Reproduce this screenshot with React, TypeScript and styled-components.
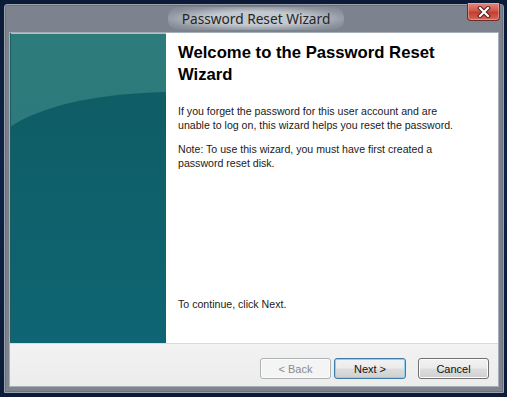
import styled, { createGlobalStyle } from 'styled-components';

const GlobalStyle = createGlobalStyle`
  html, body {
    margin: 0;
    padding: 0;
    width: 507px;
    height: 397px;
    overflow: hidden;
  }
  body {
    font-family: "Liberation Sans", Arial, sans-serif;
  }
`;

const Desktop = styled.div`
  width: 507px;
  height: 397px;
  box-sizing: border-box;
  padding: 4px 3px 4px 4px;
  background: linear-gradient(180deg, #0b1a36 0%, #102448 40%, #0c1b38 100%);
`;

const Window = styled.div`
  height: 100%;
  box-sizing: border-box;
  display: flex;
  flex-direction: column;
  background: linear-gradient(180deg, #7c838e 0%, #787f8b 60%, #7d848f 100%);
  border: 1px solid #9aa1ab;
  border-radius: 3px 3px 0 0;
  box-shadow: inset 0 0 0 1px #6c737e;
  padding: 0 4px 5px 4px;
`;

const TitleBar = styled.div`
  position: relative;
  height: 27px;
  display: flex;
  align-items: center;
  justify-content: center;
  flex-shrink: 0;
`;

const Title = styled.span`
  font-family: "Noto Sans", "Open Sans", sans-serif;
  font-size: 13.7px;
  color: #262626;
  padding: 2px 14px;
  margin-left: 4px;
  border-radius: 10px;
  background: radial-gradient(ellipse at center, rgba(200, 205, 211, 0.95) 40%, rgba(160, 166, 175, 0.5) 75%, rgba(124, 131, 142, 0) 100%);
`;

const CloseButton = styled.div`
  position: absolute;
  top: -2px;
  right: -1px;
  width: 33px;
  height: 18px;
  box-sizing: border-box;
  display: flex;
  align-items: center;
  justify-content: center;
  border: 1px solid #6e2a25;
  border-top: none;
  border-radius: 0 0 4px 4px;
  background: linear-gradient(180deg, #e38a80 0%, #d0574b 45%, #c23f32 55%, #d4665a 100%);
  box-shadow: inset 0 0 0 1px rgba(255, 200, 190, 0.45);
`;

const ClientArea = styled.div`
  flex: 1;
  display: flex;
  flex-direction: column;
  border: 1px solid #a8aeb6;
  background: #f0f0f0;
`;

const Content = styled.div`
  height: 310px;
  display: flex;
  background: #ffffff;
  flex-shrink: 0;
`;

const Sidebar = styled.div`
  width: 156px;
  flex-shrink: 0;
  background: #2a7778;

  svg {
    display: block;
  }
`;

const Main = styled.div`
  flex: 1;
  display: flex;
  flex-direction: column;
  padding: 9px 12px 0 12px;
  color: #111;
`;

const Heading = styled.h1`
  margin: 0;
  font-family: "Liberation Sans", Arial, sans-serif;
  font-weight: bold;
  font-size: 16.7px;
  line-height: 22px;
  color: #000;
`;

const Paragraph = styled.p<{ $top: number; $bottom?: number }>`
  margin: ${({ $top }) => $top}px 0 ${({ $bottom }) => $bottom ?? 0}px 0;
  font-size: 10.6px;
  line-height: 14px;
  color: #1a1a1a;
`;

const Spacer = styled.div`
  flex: 1;
`;

const Footer = styled.div`
  flex: 1;
  display: flex;
  justify-content: flex-end;
  align-items: flex-start;
  padding: 14px 9px 0 0;
  border-top: 1px solid #dadada;
  background: linear-gradient(180deg, #f2f2f2 0%, #ececec 100%);
`;

const Button = styled.button<{ $default?: boolean; $gap?: number }>`
  width: ${({ $default }) => ($default ? 72 : 71)}px;
  height: 21px;
  margin-left: ${({ $gap }) => $gap ?? 0}px;
  padding: 0;
  font-family: "Liberation Sans", Arial, sans-serif;
  font-size: 11px;
  color: #111;
  border-radius: 3px;
  border: 1px solid ${({ $default }) => ($default ? '#3d7bad' : '#707070')};
  background: linear-gradient(180deg, #f2f2f2 0%, #ebebeb 48%, #dddddd 52%, #cfcfcf 100%);
  box-shadow: inset 0 0 0 1px ${({ $default }) => ($default ? '#8fd0f0' : '#fcfcfc')};

  &:disabled {
    color: #8a8a8a;
    border-color: #adb2b5;
    background: #f4f4f4;
    box-shadow: inset 0 0 0 1px #fbfbfb;
  }
`;

function CloseGlyph() {
  return (
    <svg width="14" height="12" viewBox="0 0 14 12">
      <path d="M3 2 L11 10 M11 2 L3 10" stroke="#4a1a16" strokeWidth="4" strokeLinecap="square" />
      <path d="M3 2 L11 10 M11 2 L3 10" stroke="#ffffff" strokeWidth="2.2" strokeLinecap="square" />
    </svg>
  );
}

function SidebarArt() {
  return (
    <svg width="156" height="310" viewBox="0 0 156 310">
      <defs>
        <linearGradient id="top" x1="0" y1="0" x2="0" y2="1">
          <stop offset="0" stopColor="#2e7b7c" />
          <stop offset="1" stopColor="#28797a" />
        </linearGradient>
        <linearGradient id="low" x1="0" y1="0" x2="0" y2="1">
          <stop offset="0" stopColor="#0f5d65" />
          <stop offset="1" stopColor="#0e6573" />
        </linearGradient>
      </defs>
      <rect width="156" height="310" fill="url(#top)" />
      <path d="M0 94 C30 74 80 61 156 59 L156 310 L0 310 Z" fill="url(#low)" />
      <rect x="0" y="0" width="156" height="1" fill="#a9c6c8" />
      <rect x="0" y="0" width="1" height="310" fill="#1f5e60" />
    </svg>
  );
}

export default function App() {
  return (
    <>
      <GlobalStyle />
      <Desktop>
        <Window>
          <TitleBar>
            <Title>Password Reset Wizard</Title>
            <CloseButton>
              <CloseGlyph />
            </CloseButton>
          </TitleBar>
          <ClientArea>
            <Content>
              <Sidebar>
                <SidebarArt />
              </Sidebar>
              <Main>
                <Heading>
                  Welcome to the Password Reset
                  <br />
                  Wizard
                </Heading>
                <Paragraph $top={18}>
                  If you forget the password for this user account and are
                  <br />
                  unable to log on, this wizard helps you reset the password.
                </Paragraph>
                <Paragraph $top={10}>
                  Note: To use this wizard, you must have first created a
                  <br />
                  password reset disk.
                </Paragraph>
                <Spacer />
                <Paragraph $top={0} $bottom={32}>
                  To continue, click Next.
                </Paragraph>
              </Main>
            </Content>
            <Footer>
              <Button disabled>&lt; Back</Button>
              <Button $default $gap={3}>Next &gt;</Button>
              <Button $gap={12}>Cancel</Button>
            </Footer>
          </ClientArea>
        </Window>
      </Desktop>
    </>
  );
}
